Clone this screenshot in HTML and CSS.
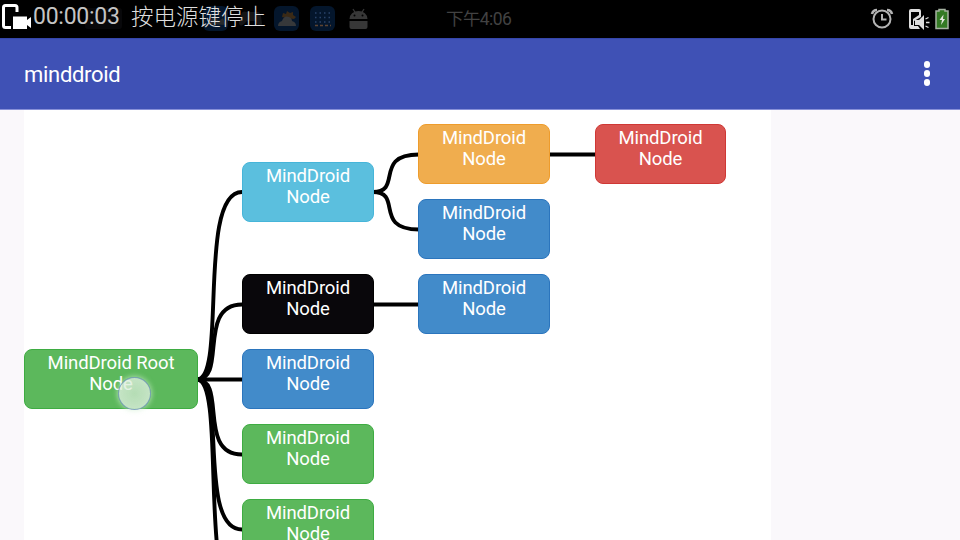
FILE: index.html
```html
<!DOCTYPE html>
<html lang="zh-CN">
<head>
<meta charset="utf-8">
<title>minddroid</title>
<link rel="stylesheet" href="styles.css">
</head>
<body>
<div class="screen">
  <header class="status">
    <div class="tray">
      <svg width="380" height="37" viewBox="0 0 380 37">
        <rect x="85" y="8" width="37" height="21" rx="3" fill="#08080a"/>
        <g fill="#04162c">
          <rect x="203" y="6" width="25" height="25" rx="6"/>
          <rect x="274" y="6" width="25" height="25" rx="6"/>
          <rect x="310" y="6" width="25" height="25" rx="6"/>
        </g>
        <path d="M208 24l6-8 5 5 4-3 3 7z" fill="#272a2c"/>
        <path d="M241 15q1-5 6-3h8q5-1 6 4l1 8q-2 4-5 0l-2-3h-8l-3 3q-4 4-5-1z" fill="#151515"/>
        <path d="M283 13l3 1 1-3 3 2 3-1v3l3 2-2 2-8-1-4-1z" fill="#3a2a16"/>
        <path d="M278 26q0-4 4-5 2-6 7-4 3 1 3 4 4 1 4 5z" fill="#36383a"/>
        <path d="M315 13h16M315 17.500h16M315 22h16" stroke="#294368" stroke-width="1.500" stroke-dasharray="1.500 3"/>
        <path d="M315 25.500h16" stroke="#5d4431" stroke-width="1.500" stroke-dasharray="3 2"/>
        <path d="M349.500 19a9 8 0 0 1 18 0zM349.500 21h18v6q0 2-2 2h-14q-2 0-2-2z" fill="#373737"/>
        <path d="M353 9l2.500 4M364 9l-2.500 4" stroke="#373737" stroke-width="1.300"/>
        <circle cx="354.500" cy="15.500" r="1" fill="#000"/><circle cx="362.500" cy="15.500" r="1" fill="#000"/>
      </svg>
    </div>
    <div class="recording">
      <svg class="rec-icon" width="34" height="32" viewBox="0 0 34 32">
        <path d="M17 12V7.500Q17 5.500 15 5.500H5.500Q3.500 5.500 3.500 7.500V25.500Q3.500 27.500 5.500 27.500H11" fill="none" stroke="#fff" stroke-width="3"/>
        <path d="M13 16.500H27V20L31 17V28L27 25V29H13z" fill="#fff"/>
      </svg>
      <span class="timer">00:00:03</span>
      <span class="hint">按电源键停止</span>
    </div>
    <time class="clock">下午4:06</time>
    <svg class="system" width="84" height="37" viewBox="0 0 84 37">
      <g fill="none" stroke="#b4b4b4" stroke-width="2">
        <circle cx="6" cy="19" r="8.500"/>
        <path d="M6 14v5.500h4.500"/>
        <path d="M-4 14Q-3 10 1 10M16 14Q15 10 11 10" stroke-width="2.600"/>
      </g>
      <path d="M35 9h8q2 0 2 2v6l-7 4v5h4l2 3h-9q-2 0-2-2V11q0-2 2-2zM35 12v13h2v-6l6-4v-3z" fill="#dedede" fill-rule="evenodd"/>
      <path d="M39 20h4l5-5v15l-5-5h-4z" fill="#dedede"/>
      <path d="M49.500 19l3-1.500M50 22.500h3.500M49.500 26l3 1.500" stroke="#dedede" stroke-width="1.300"/>
      <path d="M61 11h2V9.500h6V11h3v17.500H60V11z" fill="#347a24" stroke="#a7b3a2" stroke-width="1.500"/>
      <path d="M67.500 14.500l-4 5.500h2.500l-1 5 4-6H67z" fill="#e3e8df"/>
    </svg>
  </header>

  <div class="appbar">
    <h1 class="title">minddroid</h1>
    <div class="menu"><i></i><i></i><i></i></div>
  </div>

  <main class="content">
    <div class="canvas">
      <svg class="links" width="747" height="430" viewBox="24 110 747 430">
        <path d="M197 379.500C227 379.500 197 192 242 192"/>
        <path d="M197 379.500C227 379.500 197 304.500 242 304.500"/>
        <path d="M197 379.500H242"/>
        <path d="M197 379.500C227 379.500 197 454.500 242 454.500"/>
        <path d="M197 379.500C227 379.500 197 529.500 242 529.500"/>
        <path d="M197 379.500C227 379.500 197 604.500 242 604.500"/>
        <path d="M373 192C403 192 373 154.500 419 154.500"/>
        <path d="M373 192C403 192 373 229.500 419 229.500"/>
        <path d="M373 304.500H419M549 154.500H596"/>
      </svg>
      <div class="node root green">MindDroid Root<br>Node</div>
      <div class="node col1 cyan row-a">MindDroid<br>Node</div>
      <div class="node col1 black row3">MindDroid<br>Node</div>
      <div class="node col1 blue row4">MindDroid<br>Node</div>
      <div class="node col1 green row5">MindDroid<br>Node</div>
      <div class="node col1 green row6">MindDroid<br>Node</div>
      <div class="node col2 orange row1">MindDroid<br>Node</div>
      <div class="node col2 blue row2">MindDroid<br>Node</div>
      <div class="node col2 blue row3">MindDroid<br>Node</div>
      <div class="node col3 red row1">MindDroid<br>Node</div>
      <div class="touch"></div>
    </div>
  </main>
</div>
</body>
</html>
```
FILE: styles.css
```css
* { box-sizing: border-box; }
body { margin: 0; font-family: Roboto, "Noto Sans CJK SC", sans-serif; }
.screen { width: 960px; height: 540px; display: flex; flex-direction: column; overflow: hidden; background: #faf8fb; }

.status { position: relative; height: 38px; flex: none; display: flex; justify-content: space-between; background: #000; }
.tray { position: absolute; left: 0; top: 0; }
.recording { position: relative; display: flex; height: 32px; color: #c4c4c4; white-space: nowrap; }
.rec-icon { flex: none; margin-right: -1px; }
.timer { font-size: 23px; line-height: 34px; width: 98px; letter-spacing: -.25px; }
.hint { font-size: 22.5px; line-height: 31px; font-family: "Noto Sans CJK SC", sans-serif; font-weight: 300; color: #dedede; }
.clock { position: absolute; left: 446px; top: 0; line-height: 38px; font-size: 17.5px; letter-spacing: -.6px; color: #424242; white-space: nowrap; }
.system { overflow: visible; }

.appbar { height: 72px; flex: none; display: flex; align-items: center; justify-content: space-between; padding: 0 30px 0 24px; background: #3f51b5; border-top: 1px solid #3546ab; border-bottom: 1px solid #8790d8; }
.title { margin: 0; padding-top: 2px; font-size: 22px; font-weight: 400; line-height: 30px; color: #fff; letter-spacing: -.3px; }
.menu { display: flex; flex-direction: column; gap: 2.5px; padding-bottom: 1px; }
.menu i { width: 6.5px; height: 6.5px; border-radius: 50%; background: #fff; }

.content { flex: 1; padding-left: 24px; overflow: hidden; }
.canvas { position: relative; width: 747px; height: 430px; background: #fff; overflow: hidden; }
.links { position: absolute; left: 0; top: 0; fill: none; stroke: #000; stroke-width: 3.9; }
.node { position: absolute; width: 132px; height: 60px; padding-top: 3px; border: 1px solid; border-radius: 8px; color: #fff; font-size: 18.5px; line-height: 21px; text-align: center; letter-spacing: -.1px; white-space: nowrap; }
.root { left: 0; top: 239px; width: 174px; }
.col1 { left: 218px; }
.col2 { left: 394px; }
.col3 { left: 571px; width: 131px; }
.row-a { top: 52px; }
.row1 { top: 14px; }
.row2 { top: 89px; }
.row3 { top: 164px; }
.row4 { top: 239px; }
.row5 { top: 314px; }
.row6 { top: 389px; }
.green { background: #5cb85c; border-color: #3eac42; }
.cyan { background: #5bbfde; border-color: #46b5d9; }
.black { background: #09070b; border-color: #000; }
.blue { background: #428bca; border-color: #2b75bd; }
.orange { background: #f0ad4e; border-color: #ee9c2c; }
.red { background: #d9534f; border-color: #cf3835; }
.touch { position: absolute; left: 94px; top: 267px; width: 33px; height: 33px; border-radius: 50%; border: 1px solid rgba(105, 145, 180, .8); background: radial-gradient(circle, rgba(215, 235, 215, .72), rgba(225, 240, 225, .84)); box-shadow: 0 0 5px 1px rgba(210, 240, 210, .6); }
```
